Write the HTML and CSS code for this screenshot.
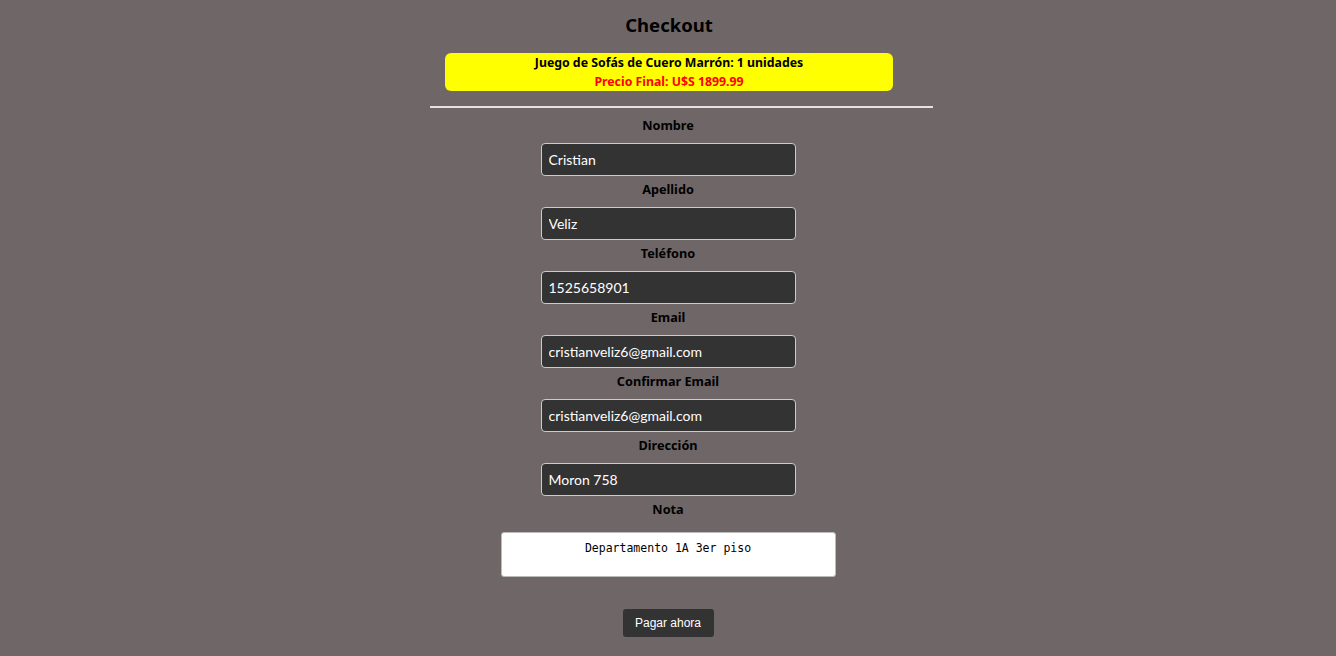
FILE: index.html
```html
<!DOCTYPE html>
<html lang="es">
<head>
<meta charset="utf-8">
<title>Checkout</title>
<link rel="stylesheet" href="styles.css">
</head>
<body>
<main class="checkout">
  <h1 class="title">Checkout</h1>
  <div class="summary">
    <div class="summary-item">Juego de Sofás de Cuero Marrón: 1 unidades</div>
    <div class="summary-price">Precio Final: U$S 1899.99</div>
  </div>
  <hr class="divider">
  <form class="form">
    <label class="label" for="nombre">Nombre</label>
    <input class="field" id="nombre" type="text" value="Cristian">
    <label class="label" for="apellido">Apellido</label>
    <input class="field" id="apellido" type="text" value="Veliz">
    <label class="label" for="telefono">Teléfono</label>
    <input class="field" id="telefono" type="text" value="1525658901">
    <label class="label" for="email">Email</label>
    <input class="field" id="email" type="text" value="cristianveliz6@gmail.com">
    <label class="label" for="email2">Confirmar Email</label>
    <input class="field" id="email2" type="text" value="cristianveliz6@gmail.com">
    <label class="label" for="direccion">Dirección</label>
    <input class="field" id="direccion" type="text" value="Moron 758">
    <label class="label" for="nota">Nota</label>
    <textarea class="note" id="nota">Departamento 1A 3er piso</textarea>
    <button class="pay" type="button">Pagar ahora</button>
  </form>
</main>
</body>
</html>
```
FILE: styles.css
```css
html, body {
  margin: 0;
  padding: 0;
  background: #6f6767;
  height: 100%;
}
body {
  font-family: "Noto Sans", "Open Sans", sans-serif;
  color: #000;
}
.checkout {
  display: flex;
  flex-direction: column;
  align-items: center;
}
.title {
  margin: 13px 0 0 2px;
  font-size: 18.5px;
  line-height: 24px;
  font-weight: 700;
}
.summary {
  margin: 16px 0 0 2px;
  width: 448px;
  height: 38px;
  box-sizing: border-box;
  padding-top: 1px;
  background: #ffff00;
  border-radius: 6px;
  text-align: center;
  font-size: 12.3px;
  font-weight: 700;
  line-height: 18px;
}
.summary-price {
  color: #ff0000;
  padding-top: 1px;
}
.divider {
  width: 503px;
  margin: 15px 0 0 27px;
  border: 0;
  border-top: 2px solid #e6e2e2;
  height: 0;
}
.form {
  display: flex;
  flex-direction: column;
  align-items: center;
  margin-top: 7px;
}
.label {
  font-size: 12.7px;
  font-weight: 700;
  line-height: 18px;
  padding-top: 1px;
  margin-top: 3px;
}
.label:first-child {
  margin-top: 0;
}
.field {
  margin-top: 9px;
  width: 255px;
  height: 33px;
  box-sizing: border-box;
  background: #333333;
  border: 1px solid #cfcaca;
  border-radius: 4px;
  color: #ffffff;
  font-family: "Lato", "Noto Sans", sans-serif;
  font-size: 14px;
  padding: 0 7px;
}
.note {
  margin-top: 14px;
  width: 335px;
  height: 45px;
  box-sizing: border-box;
  background: #ffffff;
  border: 1px solid #bbbbbb;
  border-radius: 3px;
  font-family: "DejaVu Sans Mono", "Liberation Mono", monospace;
  font-size: 11.5px;
  text-align: center;
  padding: 8px 4px 2px;
  resize: none;
  color: #000;
}
.pay {
  margin-top: 32px;
  width: 91px;
  height: 28px;
  background: #333333;
  color: #ffffff;
  border: 0;
  border-radius: 3px;
  font-family: "Liberation Sans", Arial, sans-serif;
  font-size: 12px;
  padding: 0;
}
```
